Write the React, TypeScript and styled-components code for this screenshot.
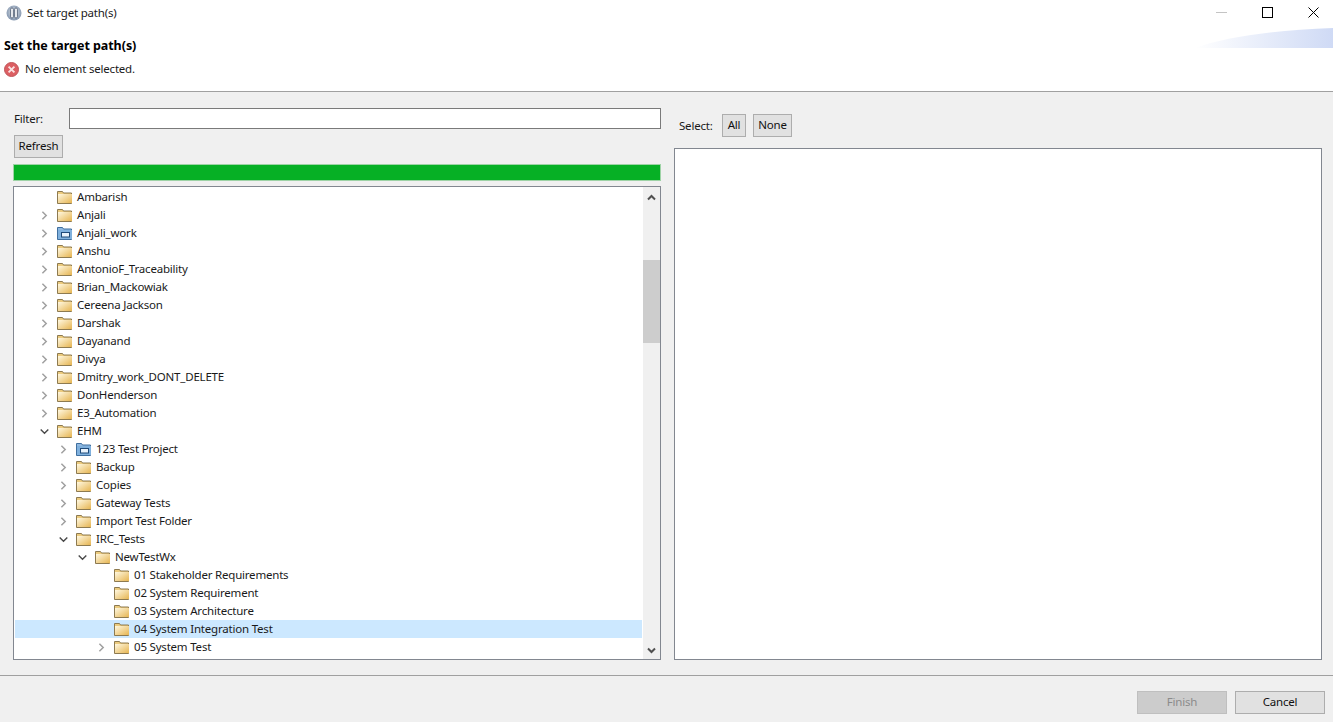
import React from 'react';
import styled, { createGlobalStyle } from 'styled-components';

const GlobalStyle = createGlobalStyle`
  html, body {
    margin: 0;
    height: 100%;
    background: #f0f0f0;
  }
  * {
    box-sizing: border-box;
  }
`;

const Dialog = styled.div`
  width: 1333px;
  height: 722px;
  display: flex;
  flex-direction: column;
  overflow: hidden;
  background: #f0f0f0;
  color: #1a1a1a;
  font-family: 'Noto Sans', 'Open Sans', sans-serif;
  font-size: 11.5px;
  letter-spacing: -0.2px;
`;

const Header = styled.header`
  position: relative;
  height: 92px;
  flex: none;
  background: #fff;
  border-bottom: 1px solid #a0a0a0;
`;

const TitleBar = styled.div`
  height: 25px;
  display: flex;
  align-items: center;
  padding-left: 6px;
  gap: 5px;
`;

const WindowControls = styled.div`
  margin-left: auto;
  display: flex;
  align-items: center;
  height: 25px;
  padding-right: 14px;
  gap: 35px;
`;

const HeaderTitle = styled.h1`
  margin: 12px 0 0 4px;
  font-size: 12.5px;
  line-height: 18px;
  font-weight: 700;
  letter-spacing: -0.05px;
  color: #000;
`;

const Message = styled.div`
  margin: 5px 0 0 4px;
  display: flex;
  align-items: center;
  gap: 6px;
  line-height: 18px;
`;

const Banner = styled.svg`
  position: absolute;
  right: 0;
  top: 28px;
`;

const Body = styled.main`
  flex: none;
  height: 583px;
  display: grid;
  grid-template-columns: 648px 648px;
  column-gap: 13px;
  padding: 16px 0 15px 13px;
`;

const Column = styled.section`
  display: flex;
  flex-direction: column;
  min-height: 0;
`;

const FilterRow = styled.div`
  display: flex;
  align-items: center;
  height: 21px;
  padding-left: 1px;
`;

const FilterLabel = styled.label`
  width: 55px;
`;

const FilterInput = styled.input`
  flex: 1;
  height: 21px;
  border: 1px solid #7a7a7a;
  background: #fff;
  padding: 0 3px;
  outline: none;
`;

const Button = styled.button<{ $width: number; $disabled?: boolean }>`
  width: ${(p) => p.$width}px;
  height: 23px;
  padding: 0 0 2px;
  font: inherit;
  letter-spacing: inherit;
  color: ${(p) => (p.$disabled ? '#8b8b8b' : '#111')};
  background: ${(p) => (p.$disabled ? '#cccccc' : '#e1e1e1')};
  border: 1px solid ${(p) => (p.$disabled ? '#bfbfbf' : '#adadad')};
`;

const RefreshWrap = styled.div`
  margin: 6px 0;
  padding-left: 1px;
`;

const Progress = styled.div`
  height: 17px;
  flex: none;
  background: #06b025;
  border: 1px solid #9ed3a6;
`;

const TreeBox = styled.div`
  margin-top: 5px;
  height: 474px;
  display: flex;
  background: #fff;
  border: 1px solid #828790;
  overflow: hidden;
`;

const TreeList = styled.ul`
  flex: 1;
  margin: 0;
  padding: 1px 1px 0 1px;
  list-style: none;
  min-width: 0;
`;

const Row = styled.li<{ $depth: number; $selected?: boolean }>`
  height: 18px;
  display: flex;
  align-items: center;
  padding-left: ${(p) => 25 + (p.$depth - 1) * 19}px;
  background: ${(p) => (p.$selected ? '#cce8ff' : 'transparent')};
  white-space: nowrap;
`;

const RowLabel = styled.span`
  padding-bottom: 2px;
`;

const Twisty = styled.span`
  width: 9px;
  height: 18px;
  margin-right: 8px;
  flex: none;
  display: flex;
  align-items: center;
  justify-content: center;
`;

const FolderSlot = styled.span`
  width: 16px;
  height: 16px;
  margin-right: 4px;
  flex: none;
  display: flex;
`;

const Scrollbar = styled.div`
  width: 17px;
  flex: none;
  display: flex;
  flex-direction: column;
  align-items: stretch;
  background: #f0f0f0;
`;

const ScrollArrow = styled.div`
  height: 18px;
  margin-top: 1px;
  flex: none;
  display: flex;
  align-items: center;
  justify-content: center;
`;

const ScrollTrack = styled.div`
  flex: 1;
  padding-top: 54px;
`;

const ScrollThumb = styled.div`
  height: 83px;
  background: #cdcdcd;
`;

const SelectRow = styled.div`
  margin-top: 6px;
  height: 23px;
  display: flex;
  align-items: center;
  padding-left: 5px;
`;

const SelectLabel = styled.span`
  width: 43px;
`;

const SelectButtons = styled.div`
  display: flex;
  gap: 7px;
`;

const ResultPanel = styled.div`
  margin-top: 11px;
  flex: 1;
  background: #fff;
  border: 1px solid #828790;
`;

const Footer = styled.footer`
  flex: 1;
  display: flex;
  justify-content: flex-end;
  gap: 8px;
  padding: 15px 8px 0 0;
  border-top: 1px solid #a0a0a0;
`;

const AppIcon = () => (
  <svg width="16" height="16" viewBox="0 0 16 16">
    <defs>
      <radialGradient id="appIconFill" cx="50%" cy="45%" r="60%">
        <stop offset="0%" stopColor="#dfe5ec" />
        <stop offset="100%" stopColor="#7b8ea8" />
      </radialGradient>
    </defs>
    <circle cx="8" cy="8" r="7.5" fill="url(#appIconFill)" />
    <rect x="4.6" y="3" width="2.8" height="10" rx="1.3" fill="#f4f6f8" stroke="#46566c" strokeWidth="0.8" />
    <rect x="8.6" y="3" width="2.8" height="10" rx="1.3" fill="#f4f6f8" stroke="#46566c" strokeWidth="0.8" />
  </svg>
);

const ErrorIcon = () => (
  <svg width="15" height="15" viewBox="0 0 15 15">
    <circle cx="7.5" cy="7.5" r="7" fill="#dc5f63" stroke="#c0565a" />
    <path d="M4.6 4.6l5.8 5.8M10.4 4.6l-5.8 5.8" stroke="#fbe3e3" strokeWidth="1.9" />
  </svg>
);

const Folder = ({ project }: { project?: boolean }) =>
  project ? (
    <svg width="16" height="16" viewBox="0 0 16 16">
      <path d="M0.5 2.5h5l1 1.5h8v10.5h-14z" fill="#8fb8e0" stroke="#3f6f9f" />
      <rect x="1" y="5" width="14" height="9" fill="#7fb0dd" />
      <rect x="4.5" y="7.5" width="8" height="4.5" fill="#e8f2fb" stroke="#1f4a78" />
    </svg>
  ) : (
    <svg width="16" height="16" viewBox="0 0 16 16">
      <defs>
        <linearGradient id="folderFill" x1="0" y1="0" x2="1" y2="1">
          <stop offset="0%" stopColor="#fff8e0" />
          <stop offset="100%" stopColor="#e6b552" />
        </linearGradient>
      </defs>
      <path d="M0.5 2.5h5l1 1.5h8v10.5h-14z" fill="#eccb7e" stroke="#8d7a50" />
      <rect x="1" y="5" width="14" height="9" fill="url(#folderFill)" />
    </svg>
  );

const Chevron = ({ open }: { open?: boolean }) => (
  <svg width="9" height="9" viewBox="0 0 9 9" fill="none">
    {open ? (
      <path d="M0.7 2.4l3.8 3.8 3.8-3.8" stroke="#4a4a4a" strokeWidth="1.4" />
    ) : (
      <path d="M2.4 0.7l3.8 3.8-3.8 3.8" stroke="#a0a0a0" strokeWidth="1.5" />
    )}
  </svg>
);

const ScrollChevron = ({ up }: { up?: boolean }) => (
  <svg width="9" height="7" viewBox="0 0 9 7" fill="none">
    <path d={up ? 'M1 5.5l3.5-3.5 3.5 3.5' : 'M1 1.5l3.5 3.5 3.5-3.5'} stroke="#505050" strokeWidth="2" />
  </svg>
);

type TreeItem = {
  label: string;
  depth: number;
  twisty?: 'open' | 'closed';
  project?: boolean;
  selected?: boolean;
};

const items: TreeItem[] = [
  { label: 'Ambarish', depth: 1 },
  { label: 'Anjali', depth: 1, twisty: 'closed' },
  { label: 'Anjali_work', depth: 1, twisty: 'closed', project: true },
  { label: 'Anshu', depth: 1, twisty: 'closed' },
  { label: 'AntonioF_Traceability', depth: 1, twisty: 'closed' },
  { label: 'Brian_Mackowiak', depth: 1, twisty: 'closed' },
  { label: 'Cereena Jackson', depth: 1, twisty: 'closed' },
  { label: 'Darshak', depth: 1, twisty: 'closed' },
  { label: 'Dayanand', depth: 1, twisty: 'closed' },
  { label: 'Divya', depth: 1, twisty: 'closed' },
  { label: 'Dmitry_work_DONT_DELETE', depth: 1, twisty: 'closed' },
  { label: 'DonHenderson', depth: 1, twisty: 'closed' },
  { label: 'E3_Automation', depth: 1, twisty: 'closed' },
  { label: 'EHM', depth: 1, twisty: 'open' },
  { label: '123 Test Project', depth: 2, twisty: 'closed', project: true },
  { label: 'Backup', depth: 2, twisty: 'closed' },
  { label: 'Copies', depth: 2, twisty: 'closed' },
  { label: 'Gateway Tests', depth: 2, twisty: 'closed' },
  { label: 'Import Test Folder', depth: 2, twisty: 'closed' },
  { label: 'IRC_Tests', depth: 2, twisty: 'open' },
  { label: 'NewTestWx', depth: 3, twisty: 'open' },
  { label: '01 Stakeholder Requirements', depth: 4 },
  { label: '02 System Requirement', depth: 4 },
  { label: '03 System Architecture', depth: 4 },
  { label: '04 System Integration Test', depth: 4, selected: true },
  { label: '05 System Test', depth: 4, twisty: 'closed' },
];

const App = () => (
  <Dialog>
    <GlobalStyle />
    <Header>
      <TitleBar>
        <AppIcon />
        <span>Set target path(s)</span>
        <WindowControls>
          <svg width="11" height="11" viewBox="0 0 11 11">
            <path d="M0 5.5h11" stroke="#c4c4c4" />
          </svg>
          <svg width="11" height="11" viewBox="0 0 11 11" fill="none">
            <rect x="0.5" y="0.5" width="10" height="10" stroke="#000" />
          </svg>
          <svg width="11" height="11" viewBox="0 0 11 11" fill="none">
            <path d="M0.5 0.5l10 10M10.5 0.5l-10 10" stroke="#000" />
          </svg>
        </WindowControls>
      </TitleBar>
      <HeaderTitle>Set the target path(s)</HeaderTitle>
      <Message>
        <ErrorIcon />
        <span>No element selected.</span>
      </Message>
      <Banner width="138" height="20" viewBox="0 0 138 20">
        <defs>
          <linearGradient id="bannerFill" x1="0" y1="0" x2="1" y2="0">
            <stop offset="0%" stopColor="#ffffff" />
            <stop offset="100%" stopColor="#cfdaf5" />
          </linearGradient>
        </defs>
        <path d="M0 20C30 9 80 2 138 0V20z" fill="url(#bannerFill)" />
      </Banner>
    </Header>
    <Body>
      <Column>
        <FilterRow>
          <FilterLabel>Filter:</FilterLabel>
          <FilterInput />
        </FilterRow>
        <RefreshWrap>
          <Button $width={49}>Refresh</Button>
        </RefreshWrap>
        <Progress />
        <TreeBox>
          <TreeList>
            {items.map((item) => (
              <Row key={item.label} $depth={item.depth} $selected={item.selected}>
                <Twisty>{item.twisty && <Chevron open={item.twisty === 'open'} />}</Twisty>
                <FolderSlot>
                  <Folder project={item.project} />
                </FolderSlot>
                <RowLabel>{item.label}</RowLabel>
              </Row>
            ))}
          </TreeList>
          <Scrollbar>
            <ScrollArrow>
              <ScrollChevron up />
            </ScrollArrow>
            <ScrollTrack>
              <ScrollThumb />
            </ScrollTrack>
            <ScrollArrow>
              <ScrollChevron />
            </ScrollArrow>
          </Scrollbar>
        </TreeBox>
      </Column>
      <Column>
        <SelectRow>
          <SelectLabel>Select:</SelectLabel>
          <SelectButtons>
            <Button $width={24}>All</Button>
            <Button $width={39}>None</Button>
          </SelectButtons>
        </SelectRow>
        <ResultPanel />
      </Column>
    </Body>
    <Footer>
      <Button $width={90} $disabled>
        Finish
      </Button>
      <Button $width={90}>Cancel</Button>
    </Footer>
  </Dialog>
);

export default App;
